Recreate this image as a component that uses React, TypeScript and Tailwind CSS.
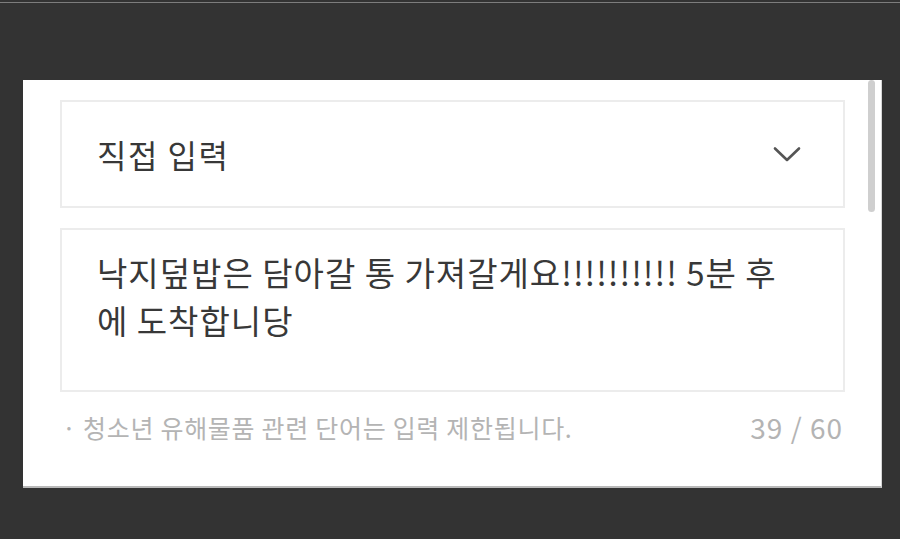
import { useState } from "react";

const font = "font-['Noto_Sans_CJK_KR','Noto_Sans',sans-serif]";

function Chevron() {
  return (
    <svg width="28" height="17" viewBox="0 0 28 17" fill="none" className="shrink-0">
      <path d="M2 2.5 L14 14 L26 2.5" stroke="#555" strokeWidth="2.6" strokeLinecap="round" strokeLinejoin="round" />
    </svg>
  );
}

export default function App() {
  const [message] = useState("낙지덮밥은 담아갈 통 가져갈게요!!!!!!!!!! 5분 후");
  const [rest] = useState("에 도착합니당");
  const count = (message + rest).length;

  return (
    <div className={`min-h-[539px] w-full bg-[#333333] ${font}`}>
      <div className="h-[2px]" />
      <div className="h-px bg-[#7d7d7d]" />

      <div className="pt-[77px] pl-[23px]">
        <div className="relative w-[859px] h-[408px] bg-white border-r border-[#d6d6d6] border-b-2 border-b-[#b9b9b9] pt-[20px] pl-[37px]">
          {/* select */}
          <div className="flex w-[785px] h-[108px] items-center justify-between border-2 border-[#ececec] pl-[35px] pr-[42px]">
            <span className="text-[32px] leading-none tracking-[1.5px] text-[#383838]">직접 입력</span>
            <Chevron />
          </div>

          {/* message box */}
          <div className="mt-[20px] w-[785px] h-[164px] border-2 border-[#ececec] pt-[18px] pl-[35px]">
            <p className="text-[33px] leading-[48px] tracking-[1px] text-[#383838]">
              {message}
              <br />
              {rest}
            </p>
          </div>

          {/* footer */}
          <div className="mt-[20px] flex w-[785px] items-center justify-between pl-[2px] pr-[2px] leading-[30px] text-[#b4b4b4]">
            <span className="text-[25px] tracking-[0.7px]">· 청소년 유해물품 관련 단어는 입력 제한됩니다.</span>
            <span className="text-[28px] tracking-[1px]">{count} / 60</span>
          </div>

          {/* scrollbar */}
          <div className="absolute right-[6px] top-0 h-[132px] w-[7px] rounded-full bg-[#cfcfcf]" />
        </div>
      </div>
    </div>
  );
}
